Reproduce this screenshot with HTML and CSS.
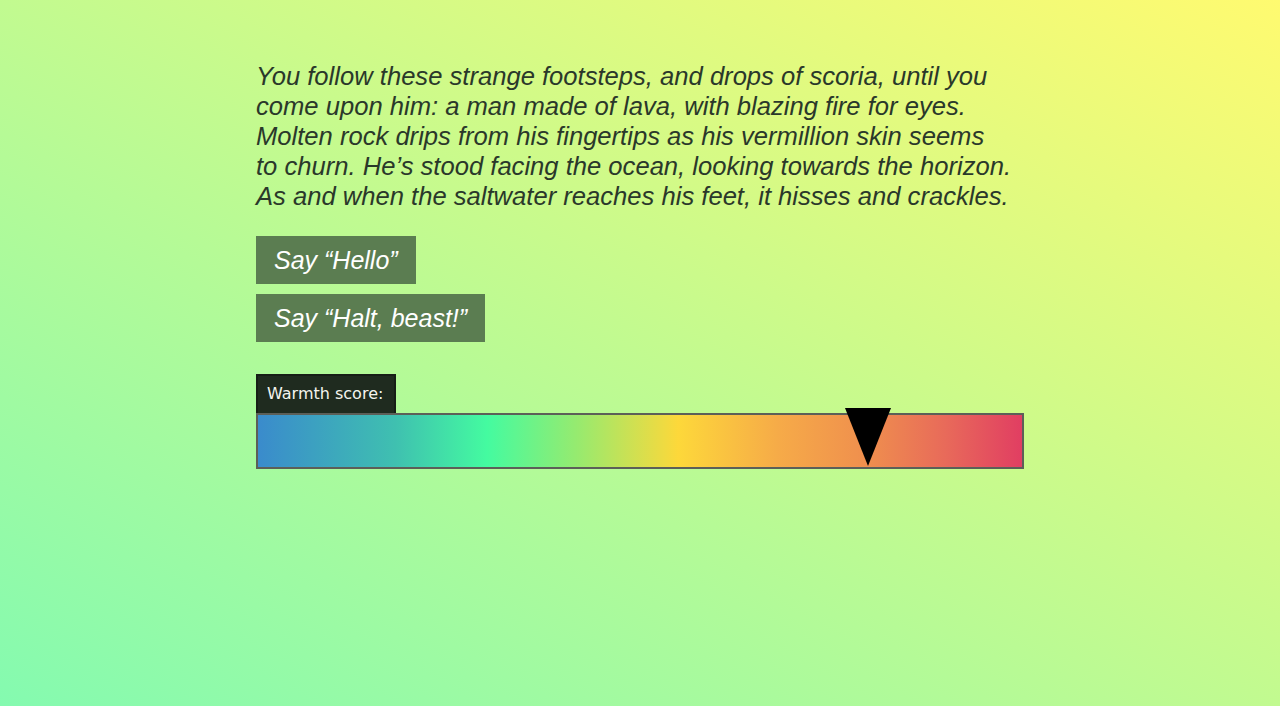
FILE: index.html
```html
<!DOCTYPE html>
<html lang="en">
<head>
    <meta charset="UTF-8">
    <meta name="viewport" content="width=device-width, initial-scale=1.0">
    <title>Lava Man</title>
    <link rel="stylesheet" href="styles.css">
</head>
<body>
    <main class="story">
        <p class="passage">
            You follow these strange footsteps, and drops of scoria, until you<br>
            come upon him: a man made of lava, with blazing fire for eyes.<br>
            Molten rock drips from his fingertips as his vermillion skin seems<br>
            to churn. He’s stood facing the ocean, looking towards the horizon.<br>
            As and when the saltwater reaches his feet, it hisses and crackles.
        </p>

        <div class="choices">
            <button class="choice">Say “Hello”</button>
            <button class="choice">Say “Halt, beast!”</button>
        </div>

        <section class="warmth">
            <div class="warmth-label">Warmth score:</div>
            <div class="warmth-bar">
                <span class="warmth-marker" style="left: 79.8%"></span>
            </div>
        </section>
    </main>
</body>
</html>
```

FILE: styles.css
```css
html, body {
    height: 100%;
}

body {
    margin: 0;
    background: linear-gradient(to top right, #84fab0, #fffa70);
    color: #2a382a;
    font-family: 'Liberation Sans', 'DejaVu Sans', sans-serif;
}

.story {
    width: 768px;
    margin: 0 auto;
    padding-top: 61px;
}

.passage {
    margin: 0;
    font-size: 25.6px;
    font-style: italic;
    line-height: 30px;
    white-space: nowrap;
}

.choices {
    display: flex;
    flex-direction: column;
    align-items: flex-start;
    gap: 10px;
    margin-top: 25px;
}

.choice {
    background-color: #5b7d51;
    color: #fff;
    border: none;
    padding: 0 18px;
    height: 48px;
    font-family: inherit;
    font-style: italic;
    font-size: 25px;
    cursor: pointer;
}

.choice:hover {
    background-color: #4b6c42;
}

.warmth {
    margin-top: 32px;
}

.warmth-label {
    display: inline-block;
    background-color: #1f2b1f;
    color: #f4f4ee;
    border: 2px solid #161e16;
    border-bottom: none;
    padding: 8px 11px 9px 9px;
    font-family: 'DejaVu Sans', sans-serif;
    font-size: 16px;
    line-height: 20px;
}

.warmth-bar {
    position: relative;
    height: 52px;
    border: 2px solid #5c5f58;
    background: linear-gradient(to right, #3a8bcc 0%, #3fc0b0 18%, #44fba0 30%, #98ea6e 42%, #fdd83a 55%, #f6ab48 68%, #ef8e4e 80%, #e86a5a 90%, #e13e62 100%);
}

.warmth-marker {
    position: absolute;
    top: -7px;
    width: 0;
    height: 0;
    margin-left: -23px;
    border-left: 23px solid transparent;
    border-right: 23px solid transparent;
    border-top: 58px solid #000;
}
```
